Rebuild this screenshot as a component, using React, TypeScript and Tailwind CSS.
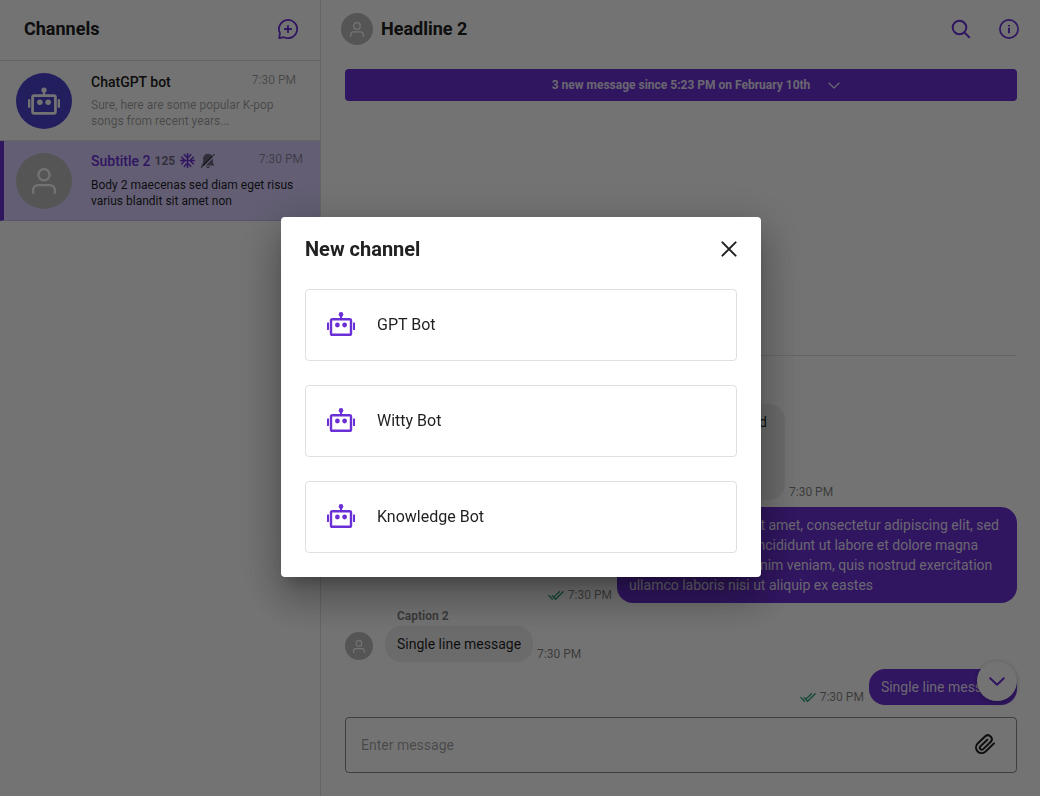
import type { ReactNode } from "react";

const LOREM =
  "Lorem ipsum dolor sit amet, consectetur adipiscing elit, sed do eiusmod tempor incididunt ut labore et dolore magna aliqua. Ut enim ad minim veniam, quis nostrud exercitation ullamco laboris nisi ut aliquip ex eastes";

function RobotIcon({ className }: { className: string }) {
  return (
    <svg viewBox="0 0 28 24" className={className} fill="currentColor" aria-hidden="true">
      <rect x="4" y="7.2" width="20" height="15.6" rx="1.4" fill="none" stroke="currentColor" strokeWidth="2.4" />
      <rect x="13" y="3" width="2" height="4" />
      <circle cx="14" cy="2.4" r="2.3" />
      <circle cx="10.4" cy="13" r="2.4" />
      <circle cx="17.6" cy="13" r="2.4" />
      <rect x="0" y="10.5" width="2" height="7.4" rx="0.3" />
      <rect x="26" y="10.5" width="2" height="7.4" rx="0.3" />
    </svg>
  );
}

function PersonAvatar({ className, iconClass }: { className: string; iconClass: string }) {
  return (
    <span className={`flex shrink-0 items-center justify-center rounded-full bg-[#bdbdbd] text-white ${className}`}>
      <svg viewBox="0 0 24 26" className={iconClass} fill="none" stroke="currentColor" strokeWidth="2.3" strokeLinecap="round" aria-hidden="true">
        <circle cx="12" cy="6.8" r="5.6" />
        <path d="M1.2 24.8v-2.6a5 5 0 0 1 5-5h11.6a5 5 0 0 1 5 5v2.6" />
      </svg>
    </span>
  );
}

function NewChatIcon() {
  return (
    <svg viewBox="0 0 20 20" className="size-5" fill="none" stroke="currentColor" strokeWidth="1.8" strokeLinecap="round" strokeLinejoin="round" aria-hidden="true">
      <path d="M1.2 19.1l.7-5A9.1 9.1 0 1 1 6 18.2z" />
      <path d="M10 6.8v6.4M6.8 10h6.4" />
    </svg>
  );
}

function SnowflakeIcon() {
  return (
    <svg viewBox="2 2 20 20" className="size-[15px]" fill="currentColor" aria-hidden="true">
      <path d="M22 11h-4.17l3.24-3.24-1.41-1.42L15 11h-2V9l4.66-4.66-1.42-1.41L13 6.17V2h-2v4.17L7.76 2.93 6.34 4.34 11 9v2H9L4.34 6.34 2.93 7.76 6.17 11H2v2h4.17l-3.24 3.24 1.41 1.42L9 13h2v2l-4.66 4.66 1.42 1.41L11 17.83V22h2v-4.17l3.24 3.24 1.42-1.41L13 15v-2h2l4.66 4.66 1.41-1.42L17.83 13H22z" />
    </svg>
  );
}

function BellOffIcon() {
  return (
    <svg viewBox="0 0 16 16" className="size-4" fill="currentColor" aria-hidden="true">
      <path d="M8 .8a5 5 0 0 1 5 5v4.4l1.8 2.2H1.2L3 10.2V5.8a5 5 0 0 1 5-5z" />
      <path d="M6.2 13.6h3.6a1.8 1.8 0 0 1-3.6 0z" />
      <path d="M2.6 14.8L15.4 2" fill="none" stroke="#dbd1ff" strokeWidth="1.2" />
      <path d="M1.4 14.2L14.2 1.4" stroke="currentColor" strokeWidth="1.3" strokeLinecap="round" />
    </svg>
  );
}

function ReadTicks() {
  return (
    <svg viewBox="0 0 16 9" className="h-[9px] w-4" fill="none" stroke="currentColor" strokeWidth="1.3" strokeLinecap="round" strokeLinejoin="round" role="img" aria-label="Read">
      <path d="M.8 4.4l3.6 3.8M4.2 4.6l3.4 3.6L15.2.8M11.4.8L6.4 5.6" />
    </svg>
  );
}

function Chevron({ className, width }: { className: string; width: string }) {
  return (
    <svg viewBox="0 0 16 9" className={className} fill="none" stroke="currentColor" strokeWidth={width} strokeLinecap="round" strokeLinejoin="round" aria-hidden="true">
      <path d="M1.2 1.2L8 7.8l6.8-6.6" />
    </svg>
  );
}

function ChannelItem({
  avatar,
  title,
  time,
  preview,
  selected = false,
}: {
  avatar: ReactNode;
  title: ReactNode;
  time: string;
  preview: string;
  selected?: boolean;
}) {
  return (
    <li className={selected ? "border-b border-l-4 border-b-[#c9bdf0] border-l-[#6b30d5] bg-[#dbd1ff]" : "border-b border-[#e0e0e0]"}>
      <a href="#channel" className={`flex h-[79px] items-center gap-[19px] ${selected ? "pr-[17px] pl-3" : "px-4"}`}>
        {avatar}
        <span className={`flex min-w-0 flex-1 flex-col ${selected ? "gap-1.5 pb-0.5" : "gap-[5px] pb-px"}`}>
          <span className={`flex h-5 items-start justify-between ${selected ? "" : "pr-2"}`}>
            {title}
            <span className="text-xs leading-4 text-black/38">{time}</span>
          </span>
          <span className={`text-xs leading-4 ${selected ? "text-black/88" : "text-black/38"}`}>{preview}</span>
        </span>
      </a>
    </li>
  );
}

function Sidebar() {
  return (
    <aside className="w-[321px] shrink-0 border-r border-[#e0e0e0] bg-white">
      <header className="flex h-[61px] items-center justify-between border-b border-[#e0e0e0] pb-0.5 pr-[22px] pl-6">
        <h1 className="text-lg leading-6 font-bold">Channels</h1>
        <button type="button" aria-label="Create channel" className="text-[#6b30d5]">
          <NewChatIcon />
        </button>
      </header>
      <ul>
        <ChannelItem
          avatar={
            <span className="flex size-14 shrink-0 items-center justify-center rounded-full bg-[#4e45d3] text-white">
              <RobotIcon className="h-7 w-8" />
            </span>
          }
          title={<span className="text-sm leading-5 font-medium">ChatGPT bot</span>}
          time="7:30 PM"
          preview="Sure, here are some popular K-pop songs from recent years..."
        />
        <ChannelItem
          selected
          avatar={<PersonAvatar className="size-14" iconClass="h-[26px] w-6" />}
          title={
            <span className="flex items-center gap-1 text-black/50">
              <span className="text-sm leading-5 font-medium text-[#6b30d5]">Subtitle 2</span>
              <span className="text-xs leading-5 font-bold">125</span>
              <span className="px-px text-[#6b30d5]">
                <SnowflakeIcon />
              </span>
              <BellOffIcon />
            </span>
          }
          time="7:30 PM"
          preview="Body 2 maecenas sed diam eget risus varius blandit sit amet non"
        />
      </ul>
    </aside>
  );
}

function Time({ read = false }: { read?: boolean }) {
  return (
    <span className="flex shrink-0 items-center gap-1 text-xs leading-4 text-black/50">
      {read && (
        <span className="text-[#259c72]">
          <ReadTicks />
        </span>
      )}
      7:30 PM
    </span>
  );
}

function Incoming({ text, sender }: { text: string; sender?: string }) {
  return (
    <div className="flex items-end gap-3">
      <div className="pb-0.5">
        <PersonAvatar className="size-7" iconClass="h-[13px] w-3" />
      </div>
      <div>
        {sender && <p className="pb-1 pl-3 text-xs leading-3 font-bold text-black/50">{sender}</p>}
        <div className="flex items-end gap-1">
          <p className="max-w-[400px] rounded-2xl bg-[#eeeeee] px-3 py-2 text-sm leading-5 text-black/88">{text}</p>
          <Time />
        </div>
      </div>
    </div>
  );
}

function Outgoing({ text }: { text: string }) {
  return (
    <div className="flex items-end justify-end gap-[5px]">
      <Time read />
      <p className="max-w-[400px] rounded-2xl bg-[#6b30d5] px-3 py-2 text-sm leading-5 text-white/88">{text}</p>
    </div>
  );
}

function Chat() {
  return (
    <main className="flex min-w-0 flex-1 flex-col bg-white">
      <header className="flex h-[61px] items-center gap-2 pr-[21px] pb-[3px] pl-5">
        <PersonAvatar className="size-8" iconClass="h-[15px] w-3.5" />
        <h2 className="flex-1 text-lg leading-6 font-bold">Headline 2</h2>
        <div className="flex items-center gap-7 text-[#6b30d5]">
          <button type="button" aria-label="Search">
            <svg viewBox="0 0 20 20" className="size-5" fill="none" stroke="currentColor" strokeWidth="2" strokeLinecap="round" aria-hidden="true">
              <circle cx="8.5" cy="8.5" r="6.8" />
              <path d="M13.4 13.4l4.8 4.8" />
            </svg>
          </button>
          <button type="button" aria-label="Channel information">
            <svg viewBox="0 0 20 20" className="size-5" fill="none" stroke="currentColor" strokeWidth="1.7" aria-hidden="true">
              <circle cx="10" cy="10" r="9.1" />
              <path d="M10 8.8v5.4M10 6v1.6" strokeWidth="1.9" />
            </svg>
          </button>
        </div>
      </header>
      <div className="flex flex-1 flex-col pt-2 pr-[23px] pb-[23px] pl-6">
        <button type="button" className="flex h-8 w-full items-center justify-center gap-[18px] rounded-sm bg-[#6b30d5] pl-[30px] text-xs font-bold text-white/88">
          3 new message since 5:23 PM on February 10th
          <Chevron className="h-[7px] w-3" width="1.6" />
        </button>
        <div className="relative mt-auto flex flex-col pb-3">
          <hr className="mb-12 border-[#e0e0e0]" />
          <div className="flex flex-col gap-[7px]">
            <Incoming text={LOREM} />
            <Outgoing text={LOREM} />
            <Incoming sender="Caption 2" text="Single line message" />
            <Outgoing text="Single line message" />
          </div>
          <button
            type="button"
            aria-label="Scroll to bottom"
            className="absolute right-0 bottom-4 flex size-10 items-center justify-center rounded-full bg-white text-[#6b30d5] shadow-[0_2px_5px_rgba(33,34,66,0.25),0_0_3px_rgba(0,0,0,0.12)]"
          >
            <Chevron className="h-[9px] w-4" width="2" />
          </button>
        </div>
        <div className="flex h-14 items-center rounded-sm border border-black/45 pr-[19px] pl-[15px]">
          <input
            type="text"
            aria-label="Message"
            placeholder="Enter message"
            className="min-w-0 flex-1 bg-transparent text-sm leading-5 outline-none placeholder:text-black/38"
          />
          <button type="button" aria-label="Attach file">
            <svg viewBox="0 0 24 24" className="size-6" fill="none" stroke="currentColor" strokeWidth="2" strokeLinecap="round" strokeLinejoin="round" aria-hidden="true">
              <path d="M21 10.4l-8.7 8.3a5.6 5.6 0 0 1-7.9-7.9l7.9-7.5a3.9 3.9 0 0 1 5.5 5.5l-7.6 7.3a1.9 1.9 0 0 1-2.8-2.7l6.9-6.6" />
            </svg>
          </button>
        </div>
      </div>
    </main>
  );
}

function NewChannelDialog() {
  return (
    <div className="fixed inset-0 flex items-center justify-center bg-black/55 pb-0.5 pl-0.5">
      <section
        role="dialog"
        aria-modal="true"
        aria-labelledby="dialog-title"
        className="w-full max-w-[480px] rounded-sm bg-white p-6 shadow-[0_11px_15px_-7px_rgba(0,0,0,0.26),0_9px_46px_8px_rgba(0,0,0,0.16),0_24px_38px_3px_rgba(0,0,0,0.18)]"
      >
        <header className="flex items-center justify-between pb-8">
          <h2 id="dialog-title" className="text-xl leading-4 font-bold">
            New channel
          </h2>
          <button type="button" aria-label="Close">
            <svg viewBox="0 0 16 16" className="size-4" fill="none" stroke="currentColor" strokeWidth="2" strokeLinecap="round" aria-hidden="true">
              <path d="M1.4 1.4l13.2 13.2M14.6 1.4L1.4 14.6" />
            </svg>
          </button>
        </header>
        <div className="flex flex-col gap-6">
          {["GPT Bot", "Witty Bot", "Knowledge Bot"].map((name) => (
            <button key={name} type="button" className="flex h-[72px] items-center gap-[22px] rounded-sm border border-[#e0e0e0] px-[21px] text-base text-black/88">
              <span className="pb-0.5 text-[#6b30d5]">
                <RobotIcon className="h-6 w-7" />
              </span>
              {name}
            </button>
          ))}
        </div>
      </section>
    </div>
  );
}

export default function App() {
  return (
    <div className="flex min-h-screen bg-white font-[Roboto,sans-serif] text-[#212121]">
      <Sidebar />
      <Chat />
      <NewChannelDialog />
    </div>
  );
}
